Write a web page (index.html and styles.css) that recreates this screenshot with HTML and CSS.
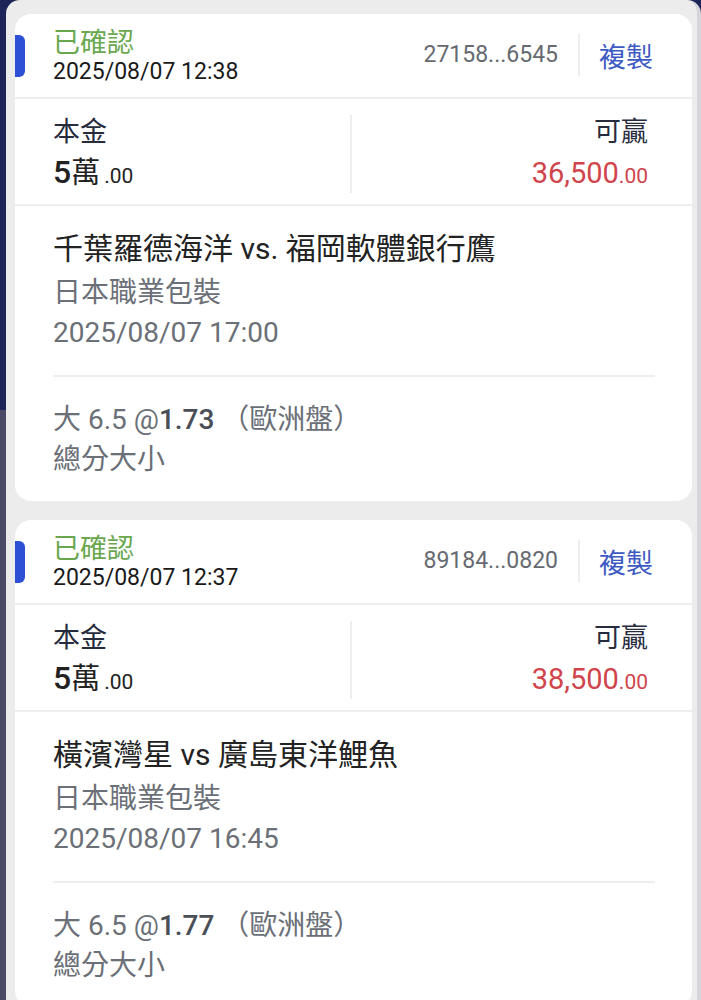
FILE: index.html
```html
<!DOCTYPE html>
<html lang="zh-Hant">
<head>
    <meta charset="UTF-8">
    <meta name="viewport" content="width=device-width, initial-scale=1.0">
    <title>注單紀錄</title>
    <link rel="stylesheet" href="styles.css">
</head>
<body>
    <div class="panel">
        <!-- Bet 1 -->
        <div class="bet_card">
            <div class="bet_head">
                <div class="head_left">
                    <div class="status">已確認</div>
                    <div class="placed">2025/08/07 12:38</div>
                </div>
                <div class="head_right">
                    <span class="bet_id">27158...6545</span>
                    <span class="copy_btn">複製</span>
                </div>
            </div>
            <div class="amounts">
                <div class="amount_col stake">
                    <div class="amount_label">本金</div>
                    <div class="amount_value"><b>5</b>萬<small>.00</small></div>
                </div>
                <div class="amount_col win">
                    <div class="amount_label">可贏</div>
                    <div class="amount_value red">36,500<small>.00</small></div>
                </div>
            </div>
            <div class="match">
                <div class="teams">千葉羅德海洋 vs. 福岡軟體銀行鷹</div>
                <div class="league">日本職業包裝</div>
                <div class="kickoff">2025/08/07 17:00</div>
            </div>
            <div class="pick">
                <div class="pick_line">大 6.5 @<b>1.73</b> （歐洲盤）</div>
                <div class="pick_market">總分大小</div>
            </div>
        </div>
        <!-- Bet 2 -->
        <div class="bet_card">
            <div class="bet_head">
                <div class="head_left">
                    <div class="status">已確認</div>
                    <div class="placed">2025/08/07 12:37</div>
                </div>
                <div class="head_right">
                    <span class="bet_id">89184...0820</span>
                    <span class="copy_btn">複製</span>
                </div>
            </div>
            <div class="amounts">
                <div class="amount_col stake">
                    <div class="amount_label">本金</div>
                    <div class="amount_value"><b>5</b>萬<small>.00</small></div>
                </div>
                <div class="amount_col win">
                    <div class="amount_label">可贏</div>
                    <div class="amount_value red">38,500<small>.00</small></div>
                </div>
            </div>
            <div class="match">
                <div class="teams">橫濱灣星 vs 廣島東洋鯉魚</div>
                <div class="league">日本職業包裝</div>
                <div class="kickoff">2025/08/07 16:45</div>
            </div>
            <div class="pick">
                <div class="pick_line">大 6.5 @<b>1.77</b> （歐洲盤）</div>
                <div class="pick_market">總分大小</div>
            </div>
        </div>
    </div>
</body>
</html>
```
FILE: styles.css
```css
* {
    margin: 0;
    padding: 0;
    box-sizing: border-box;
}
body {
    font-family: Roboto, "Noto Sans CJK TC", sans-serif;
    background: linear-gradient(to bottom, #1d2558 0, #1d2558 410px, #4c4b67 410px);
    color: #222;
    height: 1000px;
    overflow: hidden;
}
.panel {
    margin: 0 0 0 6px;
    background-color: #ececec;
    border-radius: 14px 14px 0 0;
    border-right: 4px solid #d6d6da;
    padding: 14px 5px 0 9px;
    min-height: 1000px;
    display: flex;
    flex-direction: column;
    gap: 19px;
}
.bet_card {
    position: relative;
    background: white;
    border-radius: 16px;
}
/* header */
.bet_head {
    display: flex;
    justify-content: space-between;
    align-items: center;
    padding: 14px 39px 11px 38px;
    border-bottom: 2px solid #eeeeee;
}
.bet_head::before {
    content: "";
    position: absolute;
    left: 0;
    top: 21px;
    width: 10px;
    height: 42px;
    background-color: #2c4fd6;
    border-radius: 0 6px 6px 0;
}
.status {
    color: #6aa84f;
    font-size: 27px;
    line-height: 30px;
}
.placed {
    color: #1a1a1a;
    font-size: 23px;
    line-height: 28px;
}
.head_right {
    display: flex;
    align-items: center;
    margin-top: -4px;
}
.bet_id {
    color: #666a70;
    font-size: 23px;
    padding-right: 20px;
    border-right: 2px solid #eeeeee;
    line-height: 42px;
}
.copy_btn {
    color: #3d5bc2;
    font-size: 27px;
    padding-left: 19px;
}
/* amounts */
.amounts {
    display: flex;
    padding: 16px 0 11px;
    border-bottom: 2px solid #eeeeee;
}
.amount_col {
    flex: 1;
}
.stake {
    padding-left: 38px;
    border-right: 2px solid #eeeeee;
}
.win {
    padding-right: 44px;
    text-align: right;
}
.amount_label {
    color: #262b3d;
    font-size: 27px;
    line-height: 34px;
}
.amount_value {
    font-size: 29px;
    line-height: 40px;
    margin-top: 4px;
    color: #222;
}
.amount_value b {
    font-size: 32px;
    font-weight: 500;
    line-height: 1;
}
.amount_value small {
    font-size: 21px;
    line-height: 1;
}
.stake small {
    margin-left: 4px;
}
.amount_value.red {
    color: #d0454c;
}
/* match */
.match {
    margin: 0 37px 0 38px;
    padding: 23px 0 22px;
    border-bottom: 2px solid #eeeeee;
}
.teams {
    font-size: 30px;
    line-height: 40px;
    color: #222;
}
.league,
.kickoff {
    font-size: 28px;
    line-height: 40px;
    color: #6b6f77;
}
.league {
    margin-top: 4px;
}
/* pick */
.pick {
    padding: 23px 38px 21px;
}
.pick_line,
.pick_market {
    font-size: 28px;
    line-height: 40px;
    color: #6b6f77;
}
.pick_line b {
    font-weight: 500;
    color: #4a4e57;
}
```
